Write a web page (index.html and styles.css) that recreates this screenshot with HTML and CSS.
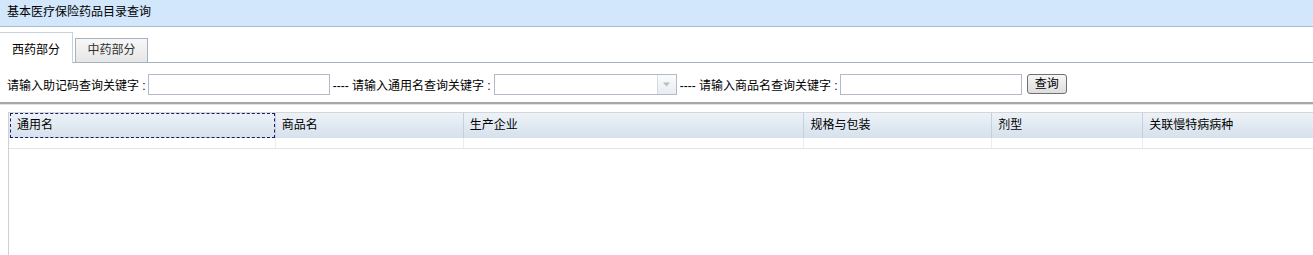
FILE: index.html
```html
<!DOCTYPE html>
<html lang="zh">
<head>
<meta charset="utf-8">
<title>基本医疗保险药品目录查询</title>
<link rel="stylesheet" href="styles.css">
</head>
<body>
<div class="titlebar">基本医疗保险药品目录查询</div>
<div class="tabs">
  <div class="tab active">西药部分</div>
  <div class="tab">中药部分</div>
</div>
<div class="search">
  <span class="label">请输入助记码查询关键字 :</span>
  <span class="input"></span>
  <span class="label l2">---- 请输入通用名查询关键字 :</span>
  <span class="combo"><span class="combo-arrow"><svg width="9" height="5" viewBox="0 0 9 5"><path d="M1 0.5 L8 0.5 L4.5 4.5 Z" fill="#b8bec6"/></svg></span></span>
  <span class="label l3">---- 请输入商品名查询关键字 :</span>
  <span class="input"></span>
  <span class="btn">查询</span>
</div>
<div class="sep"></div>
<div class="grid">
  <div class="ghead">
    <div class="gc c1"><span class="focus">通用名</span></div>
    <div class="gc c2">商品名</div>
    <div class="gc c3">生产企业</div>
    <div class="gc c4">规格与包装</div>
    <div class="gc c5">剂型</div>
    <div class="gc c6">关联慢特病病种</div>
  </div>
  <div class="grow">
    <div class="rc c1"></div>
    <div class="rc c2"></div>
    <div class="rc c3"></div>
    <div class="rc c4"></div>
    <div class="rc c5"></div>
    <div class="rc c6"></div>
  </div>
</div>
</body>
</html>
```
FILE: styles.css
```css
html, body {
  margin: 0;
  padding: 0;
  background: #ffffff;
  font-family: "Liberation Sans", "Noto Sans CJK SC", sans-serif;
  font-size: 12px;
  color: #000;
  overflow: hidden;
  height: 255px;
}
.titlebar {
  height: 27px;
  line-height: 24px;
  background: #d2e7fb;
  border-bottom: 1px solid #a9bccd;
  padding-left: 7px;
  box-sizing: border-box;
}
.tabs {
  display: flex;
  align-items: flex-end;
  height: 36px;
  border-bottom: 1px solid #a5b3c1;
  box-sizing: border-box;
  gap: 2px;
}
.tab {
  height: 24px;
  width: 73px;
  box-sizing: border-box;
  border: 1px solid #a5b3c1;
  border-bottom: none;
  background: linear-gradient(#f7f7f7, #e6e6e6);
  color: #333;
  text-align: center;
  line-height: 22px;
}
.tab.active {
  height: 31px;
  width: 73px;
  line-height: 34px;
  background: #ffffff;
  color: #000;
  border-color: #c5d1dd;
  border-left: none;
  margin-bottom: -1px;
}
.search {
  display: flex;
  align-items: center;
  height: 21px;
  margin-top: 11px;
  padding-left: 7px;
}
.label {
  white-space: nowrap;
  color: #000;
}
.input {
  width: 182px;
  height: 21px;
  box-sizing: border-box;
  border: 1px solid #b5b8c8;
  background: #fff;
  margin-left: 2px;
}
.l2 { margin-left: 3px; }
.l3 { margin-left: 3px; }
.combo {
  width: 183px;
  height: 21px;
  box-sizing: border-box;
  border: 1px solid #b5b8c8;
  background: #fff;
  margin-left: 3px;
  display: flex;
  justify-content: flex-end;
}
.combo-arrow {
  width: 19px;
  height: 19px;
  box-sizing: border-box;
  border-left: 1px solid #d7dbe2;
  background: linear-gradient(#fafbfc, #e9ecf0);
  display: flex;
  align-items: center;
  justify-content: center;
}
.btn {
  margin-left: 5px;
  width: 40px;
  height: 20px;
  box-sizing: border-box;
  border: 1px solid #707070;
  border-radius: 3px;
  background: linear-gradient(#f6f6f6, #dddddd);
  text-align: center;
  line-height: 18px;
  margin-top: -2px;
}
.sep {
  margin-top: 7px;
  height: 2px;
  background: #a7a7a7;
  border-bottom: 1px solid #e2e2e2;
}
.grid {
  margin-top: 7px;
  margin-left: 8px;
  border-left: 1px solid #d0d0d0;
  border-top: 1px solid #d6d6d6;
  height: 150px;
}
.ghead {
  display: flex;
  height: 25px;
  background: linear-gradient(#edf2f8, #d5e1ec);
}
.gc {
  box-sizing: border-box;
  height: 25px;
  line-height: 25px;
  padding-left: 6px;
  border-right: 1px solid #c5d2de;
  white-space: nowrap;
}
.c1 { width: 267px; padding-left: 1px; }
.c2 { width: 188px; }
.c3 { width: 341px; }
.c4 { width: 188px; }
.c5 { width: 151px; }
.c6 { width: 170px; border-right: none; }
.focus {
  display: block;
  height: 25px;
  box-sizing: border-box;
  border: 1px dashed #1a1a6e;
  padding-left: 6px;
  line-height: 22px;
}
.grow {
  display: flex;
  height: 10px;
  border-bottom: 1px solid #e4e4e4;
}
.rc {
  box-sizing: border-box;
  height: 10px;
  border-right: 1px solid #ececec;
}
.rc.c6 { border-right: none; }
```
